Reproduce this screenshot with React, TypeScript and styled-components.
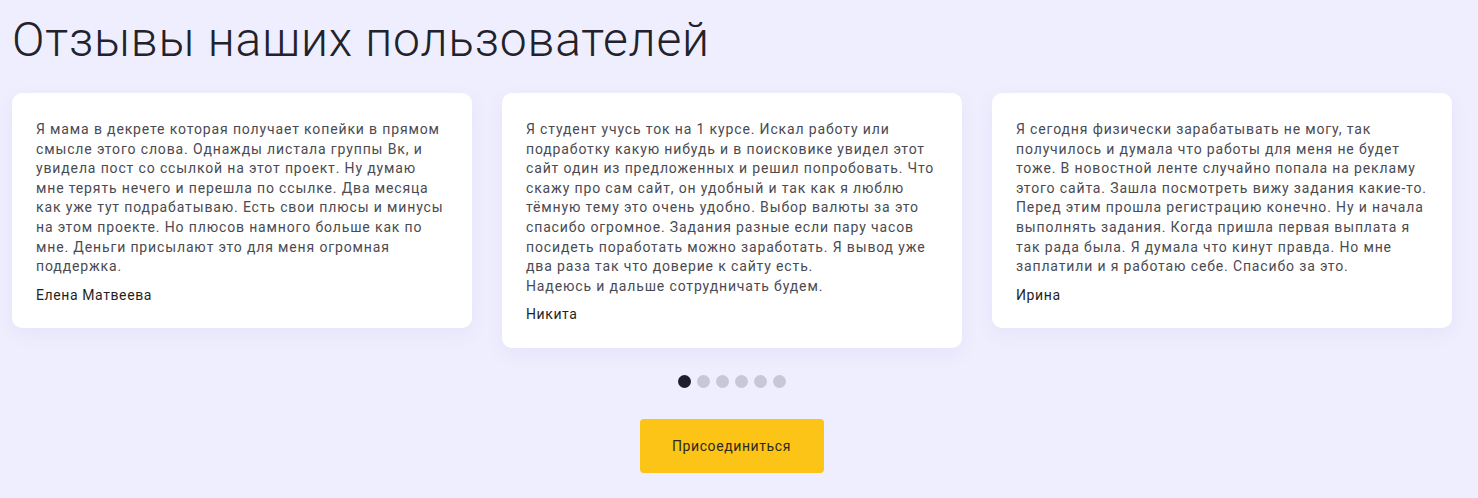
import React from "react";
import styled, { createGlobalStyle } from "styled-components";

const Global = createGlobalStyle`
  html, body { margin: 0; padding: 0; background: #efeefe; }
  body { font-family: "Roboto", sans-serif; }
  * { box-sizing: border-box; }
`;

const Page = styled.div`
  width: 1463px;
  padding: 14px 12px 26px;
  display: flex;
  flex-direction: column;
`;

const Title = styled.h1`
  margin: 0 0 27px;
  font-family: "Roboto", sans-serif;
  font-weight: 300;
  font-size: 48px;
  line-height: 52px;
  color: #22222a;
  letter-spacing: 0.78px;
`;

const Cards = styled.div`
  display: flex;
  gap: 30px;
  align-items: flex-start;
`;

const Card = styled.div`
  width: 460px;
  flex: 0 0 460px;
  background: #fff;
  border-radius: 10px;
  padding: 27px 24px 23px;
  box-shadow: 0 6px 18px rgba(120, 110, 200, 0.08);
`;

const Text = styled.p`
  margin: 0;
  font-family: "Roboto", sans-serif;
  font-size: 14px;
  line-height: 19.6px;
  letter-spacing: 0.86px;
  color: #4a4a52;
  white-space: pre-line;
`;

const Name = styled.div`
  margin-top: 9px;
  font-family: "Roboto", sans-serif;
  font-size: 14px;
  line-height: 19.6px;
  letter-spacing: 0.6px;
  color: #1f1f26;
`;

const Dots = styled.div`
  display: flex;
  justify-content: center;
  gap: 6px;
  margin-top: 27px;
`;

const Dot = styled.span<{ $active?: boolean }>`
  width: 13px;
  height: 13px;
  border-radius: 50%;
  background: ${(p) => (p.$active ? "#1e1d2c" : "#c8c7d8")};
`;

const Join = styled.button`
  align-self: center;
  margin-top: 31px;
  width: 184px;
  height: 54px;
  border: none;
  border-radius: 4px;
  background: #fcc417;
  font-family: "Roboto", sans-serif;
  font-size: 14px;
  letter-spacing: 0.6px;
  color: #2d2a22;
  cursor: pointer;
`;

const reviews = [
  {
    text: "Я мама в декрете которая получает копейки в прямом смысле этого слова. Однажды листала группы Вк, и увидела пост со ссылкой на этот проект. Ну думаю мне терять нечего и перешла по ссылке. Два месяца как уже тут подрабатываю. Есть свои плюсы и минусы на этом проекте. Но плюсов намного больше как по мне. Деньги присылают это для меня огромная поддержка.",
    name: "Елена Матвеева",
  },
  {
    text: "Я студент учусь ток на 1 курсе. Искал работу или подработку какую нибудь и в поисковике увидел этот сайт один из предложенных и решил попробовать. Что скажу про сам сайт, он удобный и так как я люблю тёмную тему это очень удобно. Выбор валюты за это спасибо огромное. Задания разные если пару часов посидеть поработать можно заработать. Я вывод уже два раза так что доверие к сайту есть.\nНадеюсь и дальше сотрудничать будем.",
    name: "Никита",
  },
  {
    text: "Я сегодня физически зарабатывать не могу, так получилось и думала что работы для меня не будет тоже. В новостной ленте случайно попала на рекламу этого сайта. Зашла посмотреть вижу задания какие-то. Перед этим прошла регистрацию конечно. Ну и начала выполнять задания. Когда пришла первая выплата я так рада была. Я думала что кинут правда. Но мне заплатили и я работаю себе. Спасибо за это.",
    name: "Ирина",
  },
];

export default function App() {
  return (
    <>
      <Global />
      <Page>
        <Title>Отзывы наших пользователей</Title>
        <Cards>
          {reviews.map((r) => (
            <Card key={r.name}>
              <Text>{r.text}</Text>
              <Name>{r.name}</Name>
            </Card>
          ))}
        </Cards>
        <Dots>
          {[0, 1, 2, 3, 4, 5].map((i) => (
            <Dot key={i} $active={i === 0} />
          ))}
        </Dots>
        <Join>Присоединиться</Join>
      </Page>
    </>
  );
}
